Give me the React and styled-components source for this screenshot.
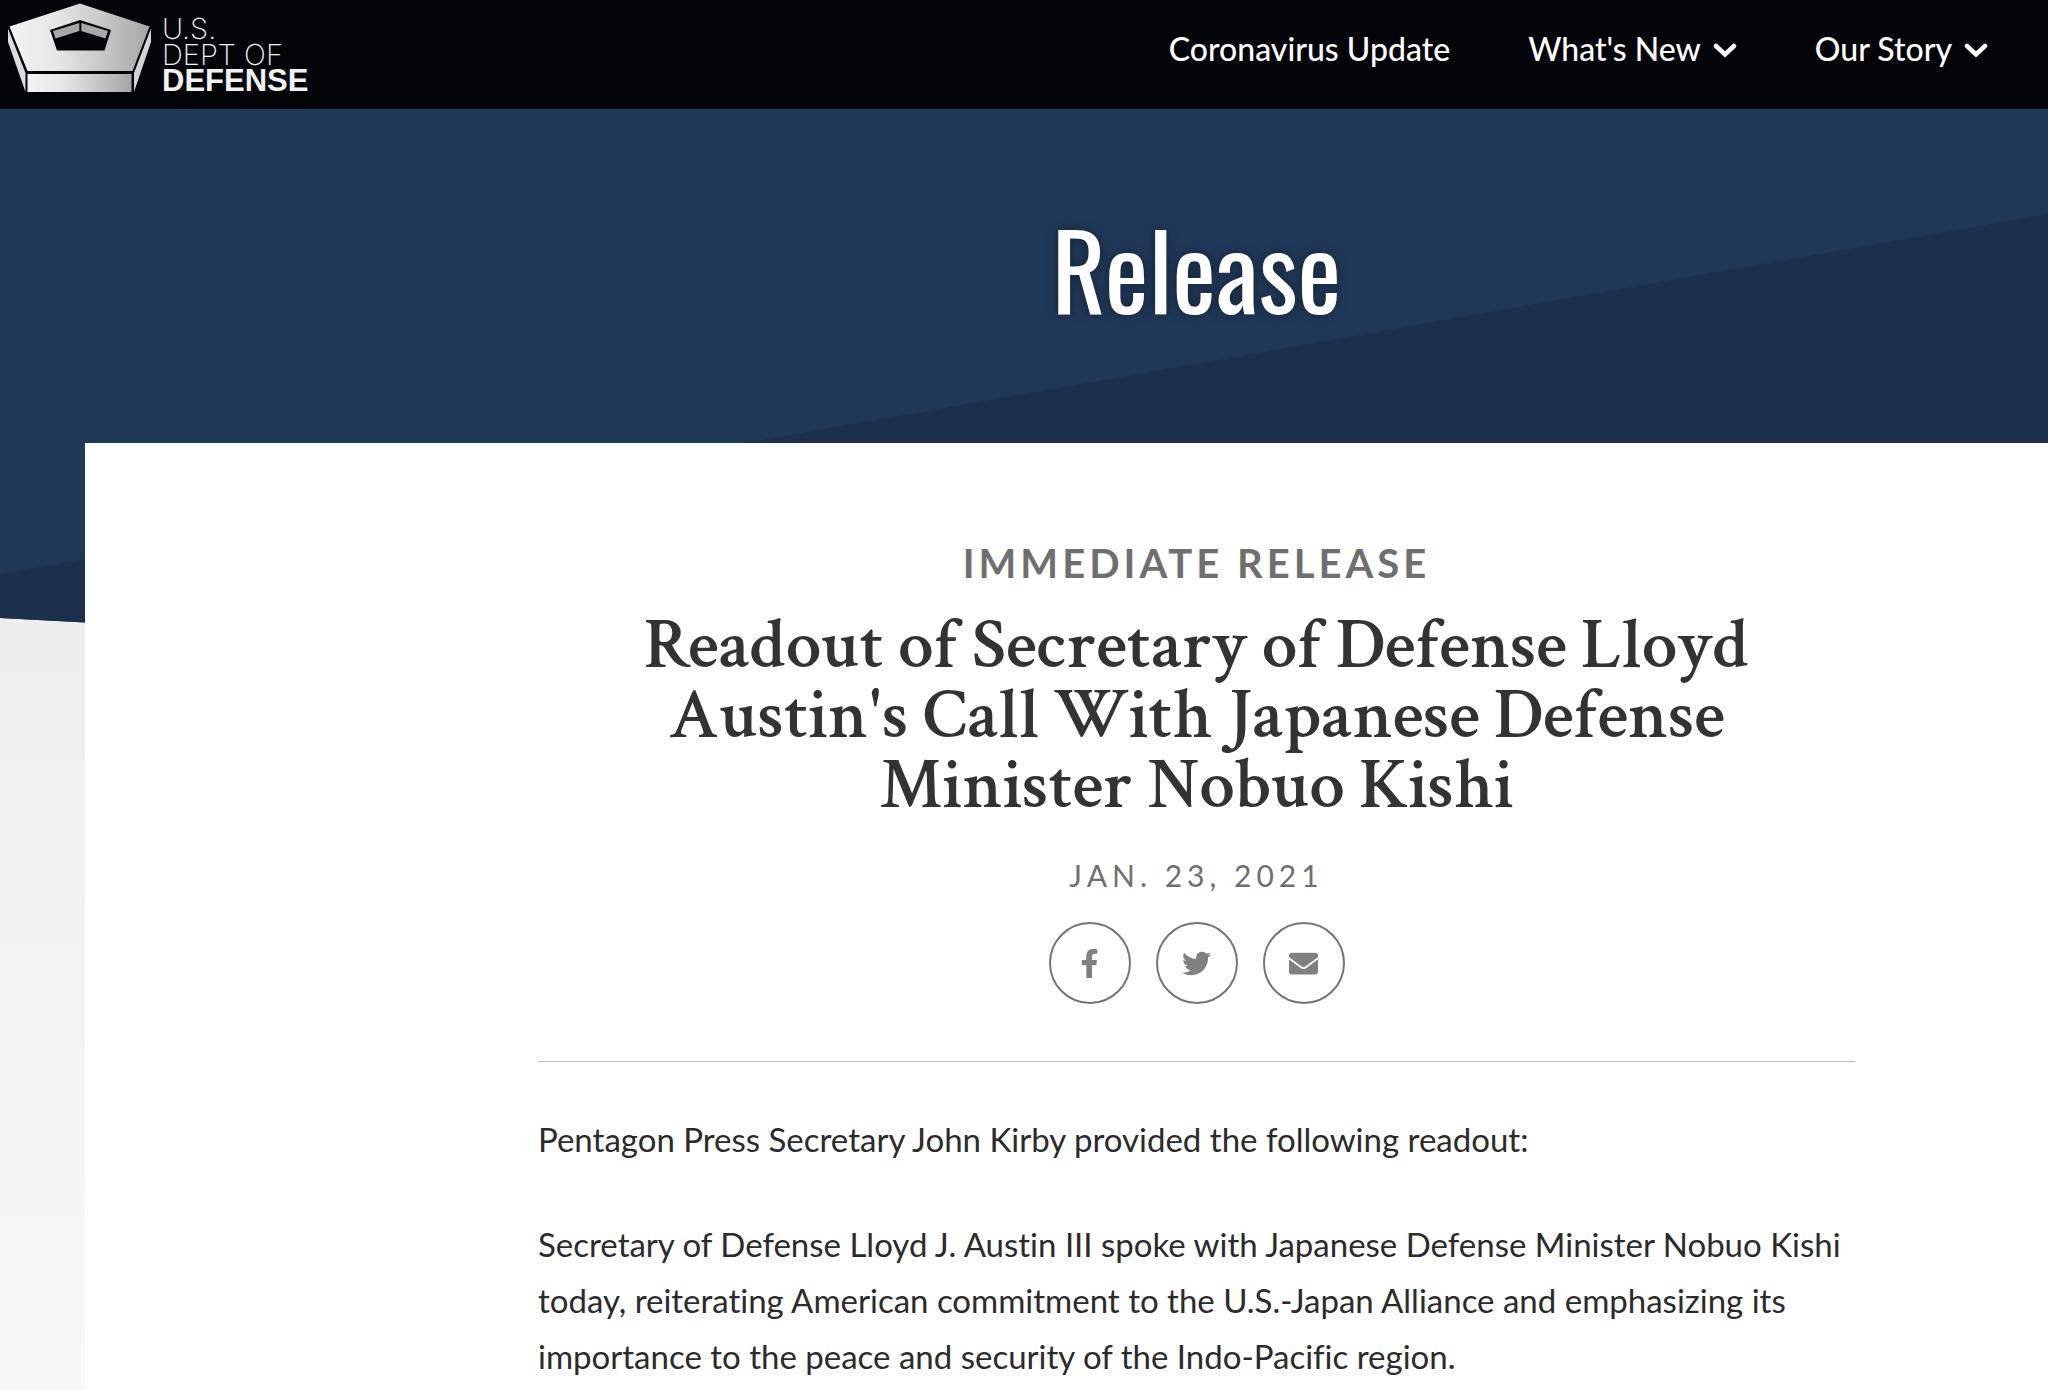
import React from "react";
import styled, { createGlobalStyle } from "styled-components";
import { FaFacebookF, FaTwitter, FaEnvelope } from "react-icons/fa";

const GlobalStyle = createGlobalStyle`
  * {
    box-sizing: border-box;
  }
  body {
    margin: 0;
    background: #fff;
    color: #2b2b2b;
    font-family: Lato, "Liberation Sans", sans-serif;
  }
`;

const Header = styled.header`
  display: flex;
  justify-content: space-between;
  align-items: flex-start;
  height: 109px;
  padding: 0 60px 0 8px;
  background: #030408;
`;

const LogoLink = styled.a`
  display: flex;
  gap: 10px;
  color: #f2f2f2;
  text-decoration: none;
`;

const LogoText = styled.span`
  display: flex;
  flex-direction: column;
  padding-top: 16px;
  font-family: Inter, "Liberation Sans", sans-serif;
  font-size: 29px;
  font-weight: 200;
  line-height: 26px;
`;

const LogoStrong = styled.strong`
  font-family: "Liberation Sans", Arial, sans-serif;
  font-size: 31px;
  font-weight: 700;
`;

const Nav = styled.nav`
  display: flex;
  align-items: center;
  gap: 78px;
  padding-top: 28px;
`;

const NavLink = styled.a`
  color: #fff;
  font-size: 32px;
  font-weight: 500;
  line-height: 42px;
  text-decoration: none;
`;

const NavButton = styled.button`
  display: flex;
  align-items: center;
  gap: 12px;
  padding: 0;
  border: 0;
  background: none;
  color: #fff;
  font-family: inherit;
  font-size: 32px;
  font-weight: 500;
  line-height: 42px;
  cursor: pointer;
`;

const Page = styled.main`
  display: grid;
  grid-template-columns: 85px 1fr;
  grid-template-rows: 334px auto;
  min-height: calc(100vh - 109px);
  background: linear-gradient(#eeeeee 500px, #f8f8f8 1300px);
`;

const Backdrop = styled.svg`
  grid-area: 1 / 1 / 3 / 3;
  width: 100%;
  height: 640px;
`;

const Banner = styled.div`
  grid-area: 1 / 2;
  z-index: 1;
  padding: 90px 193px 0 453px;
  text-align: center;
`;

const BannerTitle = styled.h2`
  margin: 0;
  color: #fff;
  font-family: Oswald, "Liberation Sans Narrow", "Liberation Sans", sans-serif;
  font-size: 104px;
  font-weight: 400;
  line-height: 136px;
  text-shadow: 0 0 12px rgba(0, 0, 0, 0.4);
`;

const Article = styled.article`
  grid-area: 2 / 2;
  z-index: 1;
  padding: 95px 193px 0 453px;
  background: #fff;
`;

const ArticleHeader = styled.header`
  display: flex;
  flex-direction: column;
  align-items: center;
  padding-bottom: 57px;
  border-bottom: 1px solid #bdbdbd;
  text-align: center;
`;

const Kicker = styled.p`
  margin: 0;
  color: #6f6f6f;
  font-size: 40px;
  font-weight: 700;
  letter-spacing: 4px;
  line-height: 50px;
`;

const Title = styled.h1`
  max-width: 1160px;
  margin: 23px 0 0;
  color: #333;
  font-family: "Crimson Text", "Liberation Serif", serif;
  font-size: 71px;
  font-weight: 600;
  line-height: 70px;
`;

const PostDate = styled.time`
  margin-top: 34px;
  color: #6f6f6f;
  font-size: 30px;
  letter-spacing: 5px;
  line-height: 40px;
`;

const ShareList = styled.div`
  display: flex;
  gap: 25px;
  margin-top: 27px;
`;

const ShareLink = styled.a`
  display: grid;
  place-items: center;
  width: 82px;
  height: 82px;
  border: 2px solid #757575;
  border-radius: 50%;
  color: #808080;
  font-size: 29px;
`;

const Body = styled.div`
  padding-top: 49px;
`;

const Paragraph = styled.p`
  margin: 0 0 49px;
  font-size: 33px;
  font-variant-ligatures: none;
  line-height: 56px;
`;

const PentagonMark = () => (
  <svg width="144" height="96" viewBox="8 0 144 96" aria-hidden="true">
    <defs>
      <linearGradient id="metal">
        <stop offset="0" stopColor="#f4f4f4" />
        <stop offset="0.35" stopColor="#e6e6e6" />
        <stop offset="1" stopColor="#a6a6a6" />
      </linearGradient>
    </defs>
    <path d="M80 3.5 149.5 26.5 132.5 71H27.5L9.5 26.5Z" fill="url(#metal)" />
    <path d="M27.5 74H131.5V92H27.5Z" fill="url(#metal)" />
    <path d="M8 28.5 25.5 73V92L8 42Z" fill="#dcdcdc" />
    <path d="M151 28.5 134 73V92L151 42Z" fill="#d4d4d4" />
    <path d="M80 20 111 30 104.5 50.5H57L50 30Z" fill="#030408" />
    <path d="M79.3 23V31L55.5 38.5 53 31Z" fill="#a8a8a8" />
    <path d="M81.3 23V31L105.5 38.5 108 31Z" fill="#a8a8a8" />
  </svg>
);

const Chevron = () => (
  <svg width="24" height="18" viewBox="0 0 24 18" aria-hidden="true">
    <path
      d="M3 6 12 14.5 21 6"
      fill="none"
      stroke="currentColor"
      strokeWidth="4.5"
      strokeLinecap="round"
    />
  </svg>
);

const App = () => {
  return (
    <>
      <GlobalStyle />
      <Header>
        <LogoLink href="#home">
          <PentagonMark />
          <LogoText>
            <span>U.S.</span>
            <span>DEPT OF</span>
            <LogoStrong>DEFENSE</LogoStrong>
          </LogoText>
        </LogoLink>
        <Nav>
          <NavLink href="#coronavirus">Coronavirus Update</NavLink>
          <NavButton type="button">
            What's New
            <Chevron />
          </NavButton>
          <NavButton type="button">
            Our Story
            <Chevron />
          </NavButton>
        </Nav>
      </Header>
      <Page>
        <Backdrop viewBox="0 0 2048 640" preserveAspectRatio="none" aria-hidden="true">
          <path d="M0 0H2048V616L0 509Z" fill="#203858" />
          <path d="M0 465 2048 105V616L0 509Z" fill="#1c304c" />
        </Backdrop>
        <Banner>
          <BannerTitle>Release</BannerTitle>
        </Banner>
        <Article>
          <ArticleHeader>
            <Kicker>IMMEDIATE RELEASE</Kicker>
            <Title>
              Readout of Secretary of Defense Lloyd Austin's Call With Japanese
              Defense Minister Nobuo Kishi
            </Title>
            <PostDate dateTime="2021-01-23">JAN. 23, 2021</PostDate>
            <ShareList>
              <ShareLink href="#facebook" aria-label="Facebook">
                <FaFacebookF />
              </ShareLink>
              <ShareLink href="#twitter" aria-label="Twitter">
                <FaTwitter />
              </ShareLink>
              <ShareLink href="#email" aria-label="Email">
                <FaEnvelope />
              </ShareLink>
            </ShareList>
          </ArticleHeader>
          <Body>
            <Paragraph>
              Pentagon Press Secretary John Kirby provided the following readout:
            </Paragraph>
            <Paragraph>
              Secretary of Defense Lloyd J. Austin III spoke with Japanese Defense
              Minister Nobuo Kishi today, reiterating American commitment to the
              U.S.-Japan Alliance and emphasizing its importance to the peace and
              security of the Indo-Pacific region.
            </Paragraph>
          </Body>
        </Article>
      </Page>
    </>
  );
};

export default App;
